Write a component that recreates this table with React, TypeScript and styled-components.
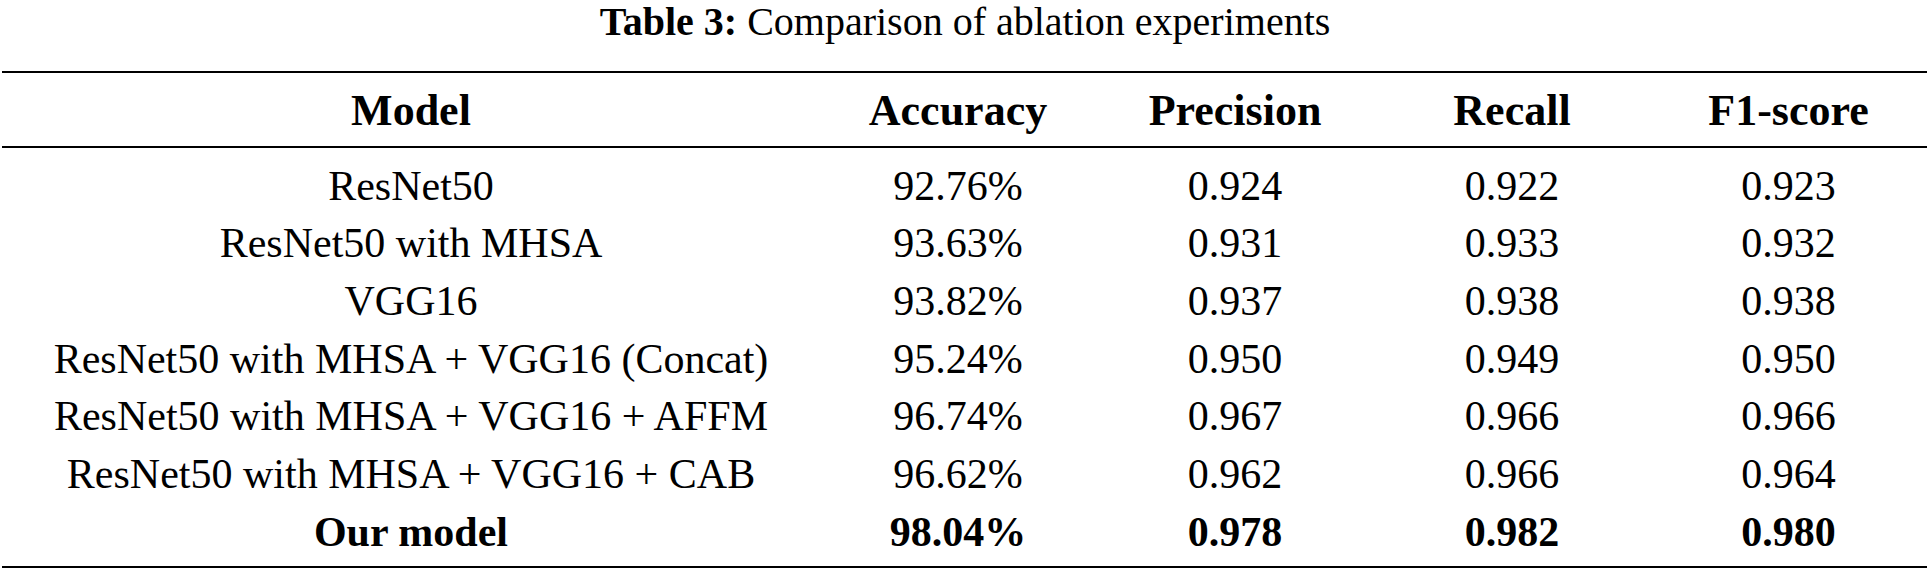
import React from "react";
import styled, { createGlobalStyle } from "styled-components";

const GlobalStyle = createGlobalStyle`
  html, body {
    margin: 0;
    padding: 0;
    background: #fff;
    overflow: hidden;
  }
  body {
    font-family: "Liberation Serif", "Times New Roman", serif;
    color: #000;
  }
`;

const Wrapper = styled.div`
  width: 1930px;
  height: 571px;
  background: #fff;
`;

const Caption = styled.div`
  text-align: center;
  font-size: 40px;
  line-height: 44px;
  height: 44px;
  white-space: nowrap;
`;

const CaptionLabel = styled.span`
  font-weight: 700;
`;

const Table = styled.div`
  margin: 27px 3px 0 2px;
  border-top: 2px solid #000;
  border-bottom: 2px solid #000;
`;

const Grid = styled.div`
  display: grid;
  grid-template-columns: 818px 276px 278px 276px 1fr;
`;

const HeadRow = styled(Grid)`
  padding-top: 3px;
  border-bottom: 2px solid #000;
`;

const HeadCell = styled.div`
  text-align: center;
  font-size: 44px;
  font-weight: 700;
  line-height: 70px;
  white-space: nowrap;
`;

const Body = styled(Grid)`
  padding: 9.5px 0 4.5px;
`;

const Cell = styled.div<{ $bold?: boolean }>`
  text-align: center;
  font-size: 42px;
  line-height: 57.7px;
  font-weight: ${(p) => (p.$bold ? 700 : 400)};
  white-space: nowrap;
`;

const columns = ["Model", "Accuracy", "Precision", "Recall", "F1-score"];

const rows = [
  ["ResNet50", "92.76%", "0.924", "0.922", "0.923"],
  ["ResNet50 with MHSA", "93.63%", "0.931", "0.933", "0.932"],
  ["VGG16", "93.82%", "0.937", "0.938", "0.938"],
  ["ResNet50 with MHSA + VGG16 (Concat)", "95.24%", "0.950", "0.949", "0.950"],
  ["ResNet50 with MHSA + VGG16 + AFFM", "96.74%", "0.967", "0.966", "0.966"],
  ["ResNet50 with MHSA + VGG16 + CAB", "96.62%", "0.962", "0.966", "0.964"],
  ["Our model", "98.04%", "0.978", "0.982", "0.980"],
];

export default function App() {
  return (
    <Wrapper>
      <GlobalStyle />
      <Caption>
        <CaptionLabel>Table 3:</CaptionLabel> Comparison of ablation experiments
      </Caption>
      <Table>
        <HeadRow>
          {columns.map((c) => (
            <HeadCell key={c}>{c}</HeadCell>
          ))}
        </HeadRow>
        <Body>
          {rows.map((r, i) =>
            r.map((v, j) => (
              <Cell key={`${i}-${j}`} $bold={i === rows.length - 1}>
                {v}
              </Cell>
            ))
          )}
        </Body>
      </Table>
    </Wrapper>
  );
}
